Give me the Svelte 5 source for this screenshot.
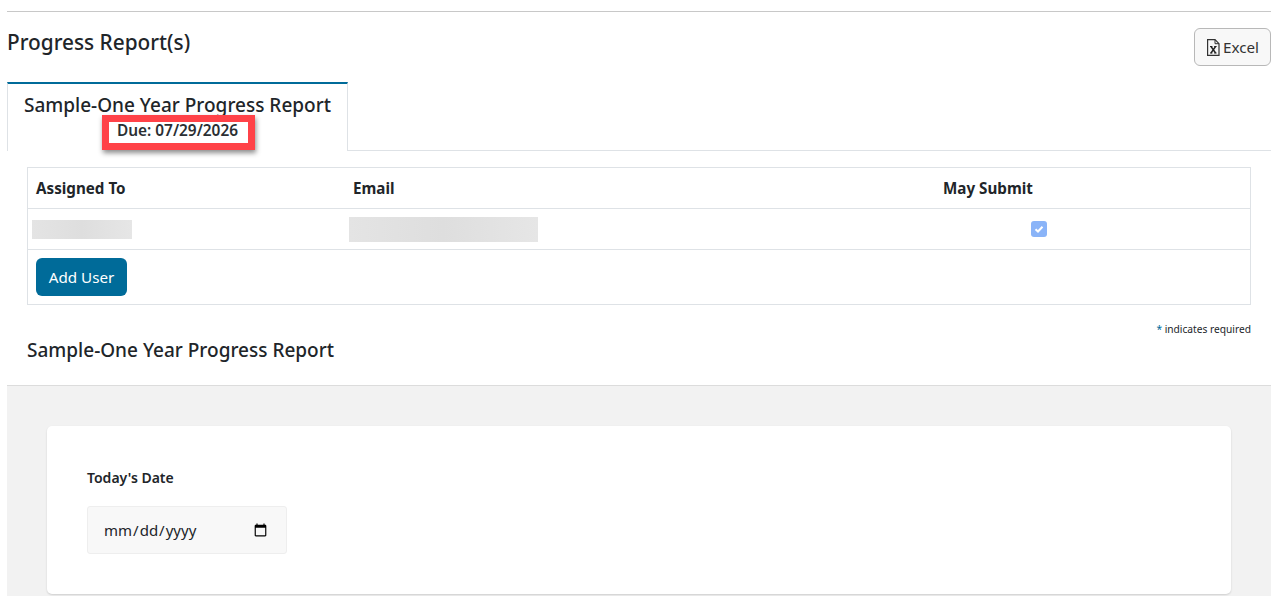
<script lang="ts">
// Progress report page: tab, assignees table and first form card
const title = 'Sample-One Year Progress Report';
</script>

<div class="page">
	<hr class="top-rule" />

	<div class="heading-row">
		<h2 class="page-title">Progress Report(s)</h2>
		<button type="button" class="excel-btn">
			<svg width="13" height="17" viewBox="0 0 13 17" fill="none" aria-hidden="true">
				<path d="M.6 .7H8L12 4.7V16.3H.6Z" stroke="#333" stroke-width="1.2" />
				<path d="M8 .7V4.7H12" stroke="#333" stroke-width="1" />
				<path d="M4 7.5L8.6 14M8.6 7.5L4 14" stroke="#222" stroke-width="1.4" />
				<path d="M3 7.5H5.4M7.2 7.5H9.6M3 14H5.4M7.2 14H9.6" stroke="#222" stroke-width="1" />
			</svg>
			<span>Excel</span>
		</button>
	</div>

	<div class="tabs">
		<div class="tab">
			<div class="tab-title">{title}</div>
			<div class="tab-due">Due: 07/29/2026</div>
			<div class="highlight"></div>
		</div>
	</div>

	<div class="table-wrap">
		<div class="row head">
			<div class="col-a">Assigned To</div>
			<div class="col-b">Email</div>
			<div class="col-c">May Submit</div>
		</div>
		<div class="row body">
			<div class="col-a"><span class="redacted name"></span></div>
			<div class="col-b"><span class="redacted email"></span></div>
			<div class="col-c">
				<span class="check">
					<svg width="10" height="10" viewBox="0 0 10 10" fill="none" aria-hidden="true">
						<path d="M1.5 5.2L4 7.5L8.5 2.8" stroke="#fff" stroke-width="2" />
					</svg>
				</span>
			</div>
		</div>
		<div class="row foot">
			<button type="button" class="add-btn">Add User</button>
		</div>
	</div>

	<div class="required-note"><span class="star">*</span> indicates required</div>
	<h3 class="form-title">{title}</h3>

	<section class="form-area">
		<div class="card">
			<label class="field-label" for="today">Today's Date</label>
			<input id="today" class="date-input" type="date" />
		</div>
	</section>
</div>

<style>
:global(body) {
	margin: 0;
	background: #fff;
	overflow: hidden;
}

.page {
	height: 596px;
	padding: 11px 7px 0;
	box-sizing: border-box;
	font-family: "Noto Sans", "Open Sans", sans-serif;
	color: #212529;
	overflow: hidden;
}

.top-rule {
	margin: 0;
	border: 0;
	border-top: 1px solid #c8c8c8;
}

.heading-row {
	display: flex;
	justify-content: space-between;
	align-items: flex-start;
	height: 70px;
}

.page-title {
	margin: 15px 0 0;
	font-size: 20.8px;
	line-height: 30px;
	font-weight: 500;
}

.excel-btn {
	display: flex;
	align-items: center;
	gap: 3px;
	margin-top: 16px;
	width: 77px;
	height: 38px;
	padding: 0 0 0 12px;
	box-sizing: border-box;
	background: #f8f8f8;
	border: 1px solid #b8b8b8;
	border-radius: 6px;
	font-family: inherit;
	font-size: 15.2px;
	color: #333;
}

.tabs {
	border-bottom: 1px solid #dee2e6;
	height: 68px;
}

.tab {
	position: relative;
	width: 341px;
	height: 69px;
	box-sizing: border-box;
	border-top: 2px solid #006b99;
	border-left: 1px solid #dee2e6;
	border-right: 1px solid #dee2e6;
	background: #fff;
	text-align: center;
}

.tab-title {
	margin-top: 8px;
	font-size: 19px;
	line-height: 27px;
	font-weight: 500;
}

.tab-due {
	margin-top: 2px;
	font-size: 15.4px;
	line-height: 20px;
	font-weight: 600;
	color: #2b2f33;
}

.highlight {
	position: absolute;
	left: 94px;
	top: 31px;
	width: 153px;
	height: 35px;
	box-sizing: border-box;
	border: 7px solid #ff4248;
	box-shadow: 1px 3px 5px rgba(0, 0, 0, 0.45);
}

.table-wrap {
	margin: 16px 20px 0;
	border: 1px solid #dee2e6;
}

.row {
	display: grid;
	grid-template-columns: 317px 590px 1fr;
	box-sizing: border-box;
	align-items: center;
	border-bottom: 1px solid #dee2e6;
	height: 41px;
	font-size: 15.2px;
}

.row.foot {
	display: block;
	height: 54px;
	padding: 8px;
	border-bottom: 0;
}

.row.head {
	font-weight: 700;
}

.col-a,
.col-b,
.col-c {
	padding-left: 8px;
}

.row.body .col-a {
	padding-left: 4px;
}

.row.body .col-b {
	padding-left: 4px;
}

.redacted {
	display: block;
	background: linear-gradient(90deg, #e4e4e4, #dedede 50%, #e6e6e6);
}

.name {
	width: 100px;
	height: 19px;
}

.email {
	width: 189px;
	height: 25px;
}

.check {
	display: flex;
	align-items: center;
	justify-content: center;
	width: 16px;
	height: 16px;
	margin-left: 88px;
	border-radius: 3px;
	background: #8ab4f8;
}

.add-btn {
	width: 91px;
	height: 38px;
	padding: 0;
	background: #006b99;
	border: 0;
	border-radius: 6px;
	color: #fff;
	font-family: inherit;
	font-size: 15.2px;
}

.required-note {
	margin: 17px 20px 0;
	text-align: right;
	font-size: 10.2px;
	line-height: 15px;
}

.star {
	color: #006b99;
}

.form-title {
	margin: 0 0 0 20px;
	font-size: 19px;
	line-height: 27px;
	font-weight: 500;
}

.form-area {
	margin-top: 21px;
	height: 220px;
	padding: 40px;
	box-sizing: border-box;
	background: #f2f2f2;
	border-top: 1px solid #dcdcdc;
}

.card {
	height: 168px;
	padding: 40px;
	box-sizing: border-box;
	background: #fff;
	border-radius: 5px;
	box-shadow: 0 1px 2px rgba(0, 0, 0, 0.15);
}

.field-label {
	display: block;
	font-size: 14px;
	line-height: 24px;
	font-weight: 600;
}

.date-input {
	display: block;
	width: 200px;
	height: 48px;
	margin-top: 16px;
	padding: 0 16px 0 15px;
	box-sizing: border-box;
	background: #f8f8f8;
	border: 1px solid #eeeeee;
	border-radius: 3px;
	font-family: inherit;
	font-size: 15px;
	color: #212529;
}
</style>
